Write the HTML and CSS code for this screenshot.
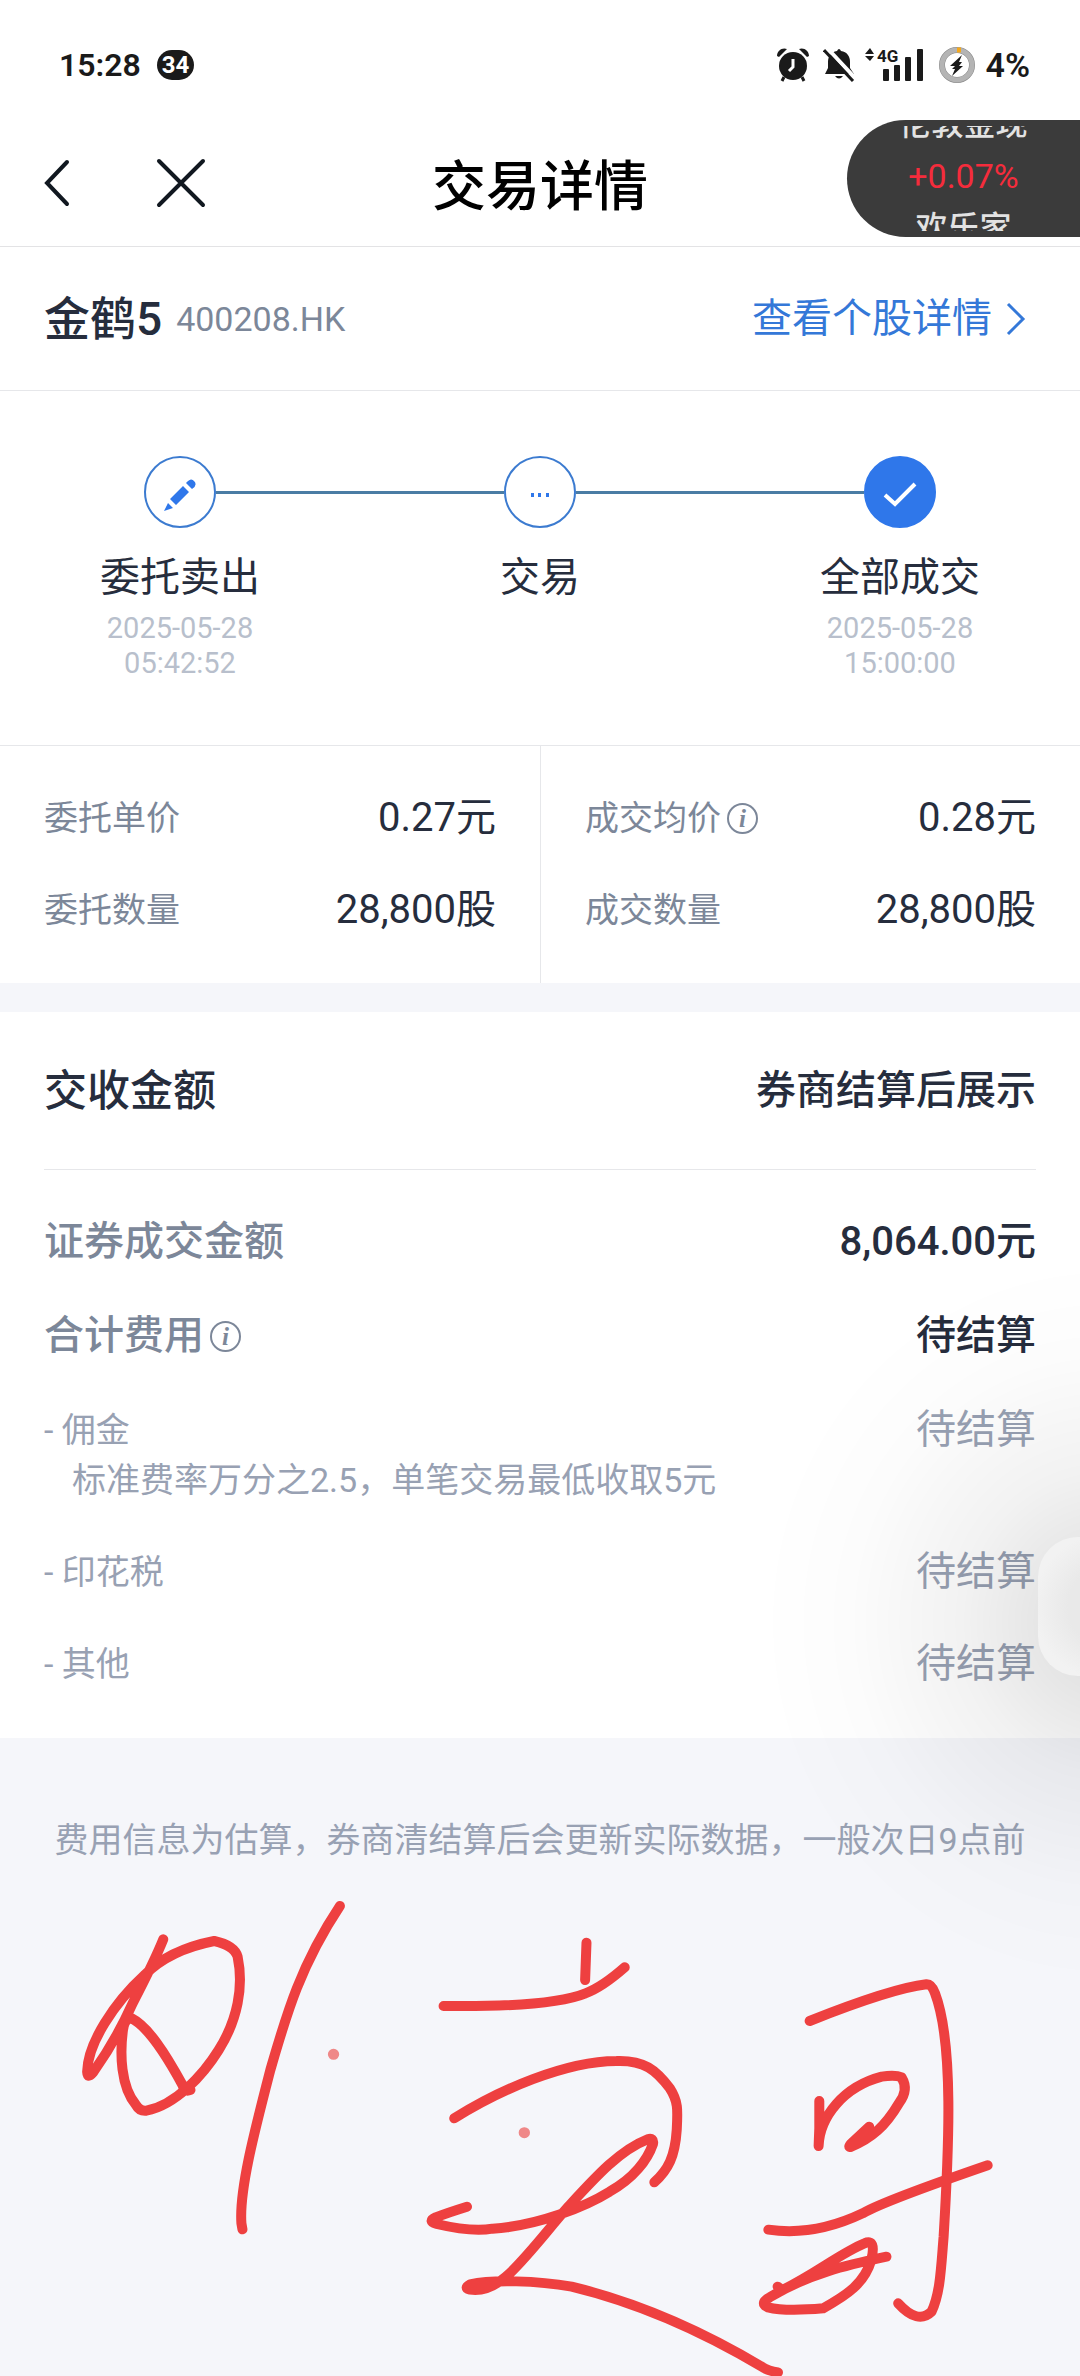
FILE: index.html
```
<!DOCTYPE html>
<html lang="zh-CN">
<head>
    <meta charset="UTF-8">
    <meta name="viewport" content="width=device-width, initial-scale=1.0">
    <title>交易详情</title>
    <link rel="stylesheet" href="styles.css">
</head>
<body>
    <div class="status-bar">
        <div class="status-left">
            <span class="clock">15:28</span>
            <span class="count">34</span>
        </div>
        <div class="status-right">
            <svg class="alarm" width="32" height="34" viewBox="0 0 32 34" fill="#1a1a1a">
                <circle cx="16" cy="18" r="14"/>
                <path d="M0 8C0 3 5-1 10 1L2 9zM32 8C32 3 27-1 22 1l8 8z"/>
                <path d="M7 29l-2 4M25 29l2 4" stroke="#1a1a1a" stroke-width="3"/>
                <path d="M16 11v8l-4 4" fill="none" stroke="#fff" stroke-width="3"/>
            </svg>
            <svg class="bell" width="32" height="34" viewBox="0 0 32 34" fill="#1a1a1a">
                <path d="M14 3q2-4 4 0c6 1 9 5 9 11v6l4 6H2l3-6v-6c0-6 3-10 9-11zM12 28h8q-4 5-8 0z"/>
                <path d="M4 0l29 31" stroke="#fff" stroke-width="4"/>
                <path d="M1 2l29 31" stroke="#1a1a1a" stroke-width="3"/>
            </svg>
            <svg class="signal" width="60" height="34" viewBox="0 0 60 34" fill="#1a1a1a">
                <path d="M0 6l5-6 4 6zM0 8h9l-4 5z"/>
                <text x="12" y="14" class="network">4G</text>
                <rect x="18" y="21" width="6" height="12" rx="1"/>
                <rect x="29" y="17" width="6" height="16" rx="1"/>
                <rect x="40" y="9" width="6" height="24" rx="1"/>
                <rect x="52" y="1" width="6" height="32" rx="1"/>
            </svg>
            <svg class="battery" width="38" height="38" viewBox="0 0 38 38">
                <circle cx="19" cy="19" r="15" fill="none" stroke="#8a8a8a" stroke-width="6"/>
                <circle cx="19" cy="19" r="15" fill="none" stroke="#b4b4b4" stroke-width="5"/>
                <path d="M19 4h4" stroke="#f5a81c" stroke-width="5"/>
                <path d="M24 9L12 20h5l-3 3h3l-3 7 11-10h-4l3-4h-3z" fill="#1a1a1a"/>
            </svg>
            <span class="level">4%</span>
        </div>
    </div>

    <header class="nav">
        <div class="nav-buttons">
            <button type="button" aria-label="返回">
                <svg width="26" height="48" viewBox="0 0 26 48"><path d="M23 3L3 24l20 21"/></svg>
            </button>
            <button type="button" aria-label="关闭">
                <svg width="50" height="50" viewBox="0 0 50 50"><path d="M3 3l44 44M47 3L3 47"/></svg>
            </button>
        </div>
        <h1>交易详情</h1>
        <div class="ticker">
            <div class="ticker-window">
                <span>伦敦金现</span>
                <span class="rise">+0.07%</span>
                <span>欢乐家</span>
            </div>
        </div>
    </header>

    <main>
        <section class="stock">
            <h2>金鹤5</h2>
            <span class="code">400208.HK</span>
            <a href="#">查看个股详情
                <svg width="20" height="34" viewBox="0 0 20 34"><path d="M2 2l15 15L2 32"/></svg>
            </a>
        </section>

        <ol class="steps">
            <li>
                <div class="track">
                    <span class="dot">
                        <svg width="32" height="32" viewBox="0 0 32 32" fill="#2f77ea">
                            <path d="M0 32l4-8 5 5zM6 20L19 7l6 6-13 13zM22 4q5-6 8-2 4 4-2 8z"/>
                        </svg>
                    </span>
                </div>
                <div class="step-name">委托卖出</div>
                <time>2025-05-28<br>05:42:52</time>
            </li>
            <li>
                <div class="track">
                    <span class="dot">
                        <svg width="20" height="4" viewBox="0 0 20 4" fill="#2f77ea">
                            <path d="M1 0h3v4H1zM8 0h3v4H8zM16 0h3v4h-3z"/>
                        </svg>
                    </span>
                </div>
                <div class="step-name">交易</div>
            </li>
            <li>
                <div class="track">
                    <span class="dot done">
                        <svg width="36" height="26" viewBox="0 0 36 26"><path d="M3 13l10 9L33 2"/></svg>
                    </span>
                </div>
                <div class="step-name">全部成交</div>
                <time>2025-05-28<br>15:00:00</time>
            </li>
        </ol>

        <section class="order">
            <dl>
                <div class="row"><dt>委托单价</dt><dd>0.27元</dd></div>
                <div class="row"><dt>委托数量</dt><dd>28,800股</dd></div>
            </dl>
            <dl>
                <div class="row">
                    <dt>成交均价<button type="button" class="info" aria-label="成交均价说明">i</button></dt>
                    <dd>0.28元</dd>
                </div>
                <div class="row"><dt>成交数量</dt><dd>28,800股</dd></div>
            </dl>
        </section>

        <section class="settlement">
            <div class="settlement-head">
                <h2>交收金额</h2>
                <span>券商结算后展示</span>
            </div>
            <dl class="totals">
                <div class="row"><dt>证券成交金额</dt><dd>8,064.00元</dd></div>
                <div class="row">
                    <dt>合计费用<button type="button" class="info" aria-label="合计费用说明">i</button></dt>
                    <dd>待结算</dd>
                </div>
            </dl>
            <dl class="fees">
                <div class="fee">
                    <dt>- 佣金</dt><dd>待结算</dd>
                    <dd class="hint">标准费率万分之2.5，单笔交易最低收取5元</dd>
                </div>
                <div class="fee"><dt>- 印花税</dt><dd>待结算</dd></div>
                <div class="fee"><dt>- 其他</dt><dd>待结算</dd></div>
            </dl>
        </section>

        <p class="note">费用信息为估算，券商清结算后会更新实际数据，一般次日9点前</p>

        <svg class="handwriting" viewBox="0 0 3136 1518" preserveAspectRatio="none" aria-hidden="true">
            <path d="M474 208C450 270 420 330 385 400C350 480 310 550 270 608Q254 628 253 605C255 520 330 400 420 315Q490 240 622 213Q680 226 690 260C708 350 690 450 635 540C590 615 510 705 425 722Q405 724 395 705C350 650 348 550 357 480Q362 445 382 445C430 470 480 550 530 645Q535 668 553 660"/>
            <path d="M987 108C870 290 830 440 785 600C740 780 694 960 701 1060L704 1078"/>
            <path d="M1288 408C1440 410 1620 404 1700 370Q1748 352 1814 292M1703 218L1699 330"/>
            <path d="M1319 745C1450 660 1640 574 1790 573C1870 570 1905 600 1945 655C1970 695 1968 720 1965 780C1960 860 1940 900 1900 937"/>
            <path d="M1356 1010Q1300 1028 1265 1042Q1240 1054 1268 1062Q1370 1087 1430 1076C1560 1068 1700 1010 1770 965C1840 925 1880 870 1896 822Q1900 802 1880 808C1800 840 1730 920 1650 1010C1590 1080 1540 1150 1480 1210Q1420 1268 1365 1259Q1345 1254 1365 1243C1430 1228 1560 1232 1660 1250C1860 1300 2050 1390 2215 1492Q2230 1502 2259 1507"/>
            <path d="M2351 453Q2590 355 2690 343Q2705 342 2715 370C2770 520 2755 840 2740 1100C2732 1200 2730 1270 2705 1325Q2665 1365 2608 1300"/>
            <path d="M2379 693V775L2377 828C2380 740 2450 650 2560 620Q2600 614 2618 622Q2640 660 2610 700C2570 770 2530 805 2472 830Q2460 834 2472 820L2524 770"/>
            <path d="M2231 1079C2330 1094 2420 1072 2505 1030Q2570 992 2868 886"/>
            <path d="M2258 1250L2272 1260C2370 1210 2440 1150 2510 1120Q2545 1104 2530 1170C2510 1240 2460 1275 2390 1315Q2280 1325 2230 1312Q2204 1300 2235 1282C2350 1210 2460 1185 2574 1160"/>
            <g class="taps">
                <path d="M968 553h1M1522 788h1"/>
            </g>
        </svg>
    </main>

    <div class="dock">
        <button type="button" class="floating" aria-label="悬浮球"></button>
    </div>
</body>
</html>
```
FILE: styles.css
```
* {
    box-sizing: border-box;
}
body {
    margin: 0;
    font-family: Roboto, "Noto Sans CJK SC", sans-serif;
    font-size: 40px;
    line-height: 50px;
    color: #262d3d;
    background-color: #f5f6fa;
    overflow-x: hidden;
}
h1, h2, p, dl, dd, ol {
    margin: 0;
    padding: 0;
}
h1, h2 {
    font-weight: 500;
}
button {
    padding: 0;
    border: none;
    background: none;
    cursor: pointer;
}
svg {
    display: block;
    flex: none;
}

/* status bar */
.status-bar {
    display: flex;
    justify-content: space-between;
    padding: 40px 50px 30px 59px;
    background-color: #fff;
    color: #1a1a1a;
}
.status-left, .status-right {
    display: flex;
    align-items: center;
}
.status-left {
    gap: 16px;
}
.clock {
    font-size: 32px;
    font-weight: 600;
}
.level {
    font-size: 34px;
    font-weight: 600;
}
.count {
    padding: 0 5px;
    border-radius: 15px;
    background-color: #1a1a1a;
    color: #fff;
    font-size: 24px;
    font-weight: 700;
    line-height: 30px;
}
.bell {
    margin-left: 14px;
}
.signal {
    margin-left: 10px;
    overflow: visible;
}
.battery {
    margin: 0 9px 0 13px;
}
.network {
    font-size: 17px;
    font-weight: 700;
}

/* nav */
.nav {
    display: grid;
    grid-template-columns: 1fr auto 1fr;
    align-items: center;
    height: 127px;
    border-bottom: 1px solid #e3e3e5;
    background-color: #fff;
}
.nav-buttons {
    display: flex;
    align-items: center;
    gap: 86px;
    padding-left: 44px;
}
.nav-buttons path {
    fill: none;
    stroke: #111820;
    stroke-width: 4;
    stroke-linecap: round;
}
.nav h1 {
    padding-top: 10px;
    font-size: 54px;
    line-height: 80px;
    color: #000;
}
.ticker {
    align-self: start;
    justify-self: end;
    width: 233px;
    height: 117px;
    padding: 6px 0;
    border-radius: 59px 0 0 59px;
    background-color: #3b3b3b;
    color: #e2e2e2;
}
.ticker-window {
    display: flex;
    flex-direction: column;
    align-items: center;
    justify-content: center;
    height: 105px;
    padding-bottom: 6px;
    overflow: hidden;
    font-size: 32px;
    font-weight: 500;
}
.ticker span {
    flex: none;
}
.ticker .rise {
    height: 54px;
    line-height: 54px;
    color: #f52c3c;
    font-size: 34px;
    font-weight: 400;
}

/* stock */
.stock {
    display: flex;
    align-items: center;
    height: 144px;
    padding: 0 54px 0 44px;
    border-bottom: 1px solid #e6e7ea;
    background-color: #fff;
}
.stock h2 {
    font-size: 46px;
}
.code {
    margin-left: 14px;
    font-size: 34px;
    color: #7c8799;
}
.stock a {
    display: flex;
    align-items: center;
    gap: 14px;
    margin-left: auto;
    color: #3478d8;
    text-decoration: none;
}
.stock a path {
    fill: none;
    stroke: #3478d8;
    stroke-width: 3;
}

/* progress */
.steps {
    display: flex;
    padding: 65px 0 64px;
    border-bottom: 1px solid #e6e7ea;
    background-color: #fff;
    list-style: none;
    text-align: center;
}
.steps li {
    flex: 1;
}
.track {
    display: flex;
    align-items: center;
}
.track::before, .track::after {
    content: "";
    flex: 1;
    height: 3px;
    background-color: #4a7ca4;
}
.steps li:first-child .track::before,
.steps li:last-child .track::after {
    background: none;
}
.dot {
    display: flex;
    align-items: center;
    justify-content: center;
    width: 72px;
    height: 72px;
    padding-top: 6px;
    border: 2px solid #3c7bd0;
    border-radius: 50%;
}
.dot.done {
    border-color: #2f77ea;
    background-color: #2f77ea;
}
.done path {
    fill: none;
    stroke: #fff;
    stroke-width: 4;
}
.step-name {
    margin: 22px 0 5px;
    line-height: 56px;
}
.steps time {
    display: block;
    font-size: 29px;
    line-height: 35px;
    color: #b8bfcc;
}

/* order */
.order {
    display: grid;
    grid-template-columns: 1fr 1fr;
    background-color: #fff;
}
.order dl {
    padding: 26px 44px 27px;
}
.order dl + dl {
    border-left: 1px solid #e6e7ea;
}
.row {
    display: flex;
    align-items: center;
    justify-content: space-between;
    height: 92px;
}
.row dt {
    display: flex;
    align-items: center;
    color: #7c8799;
}
.order dt {
    font-size: 34px;
}
.info {
    width: 31px;
    height: 31px;
    margin-left: 6px;
    border: 2px solid #7c8799;
    border-radius: 50%;
    color: #7c8799;
    font: italic bold 25px/25px "Liberation Serif", serif;
}

/* settlement */
.settlement {
    margin-top: 29px;
    padding: 0 44px 28px;
    background-color: #fff;
}
.settlement-head {
    display: flex;
    align-items: center;
    justify-content: space-between;
    height: 158px;
    border-bottom: 1px solid #e6e7ea;
    font-weight: 500;
}
.settlement h2 {
    font-size: 43px;
}
.totals {
    padding: 25px 0 1px;
    font-weight: 500;
}
.totals .row {
    height: 94px;
}
.fee {
    display: flex;
    flex-wrap: wrap;
    justify-content: space-between;
    padding: 21px 0;
    color: #98a1b3;
}
.fee dt, .fee .hint {
    font-size: 34px;
}
.fee .hint {
    width: 100%;
    padding-left: 28px;
}
.note {
    padding-top: 72px;
    font-size: 34px;
    line-height: 60px;
    color: #98a1b3;
    text-align: center;
    white-space: nowrap;
}

/* red pen marks */
.handwriting {
    width: 100%;
    height: 506px;
}
.handwriting path {
    fill: none;
    stroke: #ee4040;
    stroke-width: 10px;
    stroke-linecap: round;
    stroke-linejoin: round;
    vector-effect: non-scaling-stroke;
}
.handwriting .taps path {
    stroke: #ef8888;
    stroke-width: 11px;
}

/* floating ball docked to the right edge, with its wide soft shadow */
.dock {
    position: fixed;
    top: 1537px;
    right: -96px;
    pointer-events: none;
}
.dock::before {
    content: "";
    position: absolute;
    z-index: -1;
    top: -280px;
    left: -280px;
    width: 700px;
    height: 730px;
    background: radial-gradient(closest-side, rgba(0, 0, 0, 0.11) 15%, rgba(0, 0, 0, 0.09) 24%, rgba(0, 0, 0, 0.05) 42%, rgba(0, 0, 0, 0.01) 74%, rgba(0, 0, 0, 0) 100%);
}
.floating {
    display: block;
    width: 138px;
    height: 139px;
    border-radius: 40px;
    background: radial-gradient(circle, #e9e9e9 40%, #f2f2f2 75%);
    pointer-events: auto;
}
```
